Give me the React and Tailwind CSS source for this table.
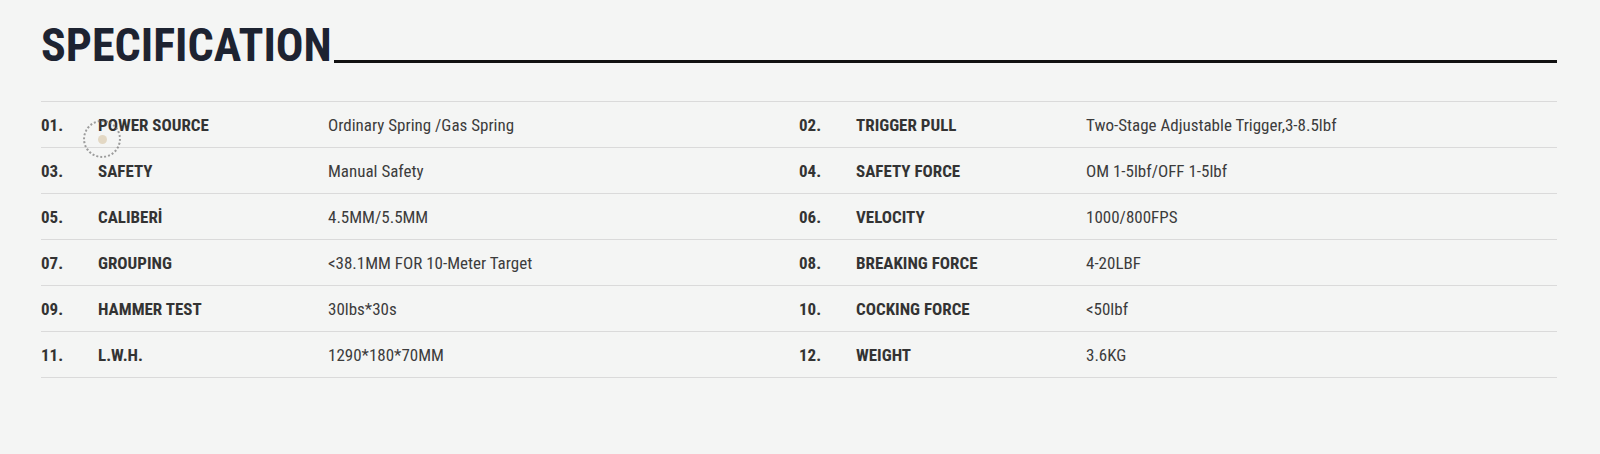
const specs = [
  ["01.", "POWER SOURCE", "Ordinary Spring /Gas Spring"],
  ["02.", "TRIGGER PULL", "Two-Stage Adjustable Trigger,3-8.5lbf"],
  ["03.", "SAFETY", "Manual Safety"],
  ["04.", "SAFETY FORCE", "OM 1-5lbf/OFF 1-5lbf"],
  ["05.", "CALIBERİ", "4.5MM/5.5MM"],
  ["06.", "VELOCITY", "1000/800FPS"],
  ["07.", "GROUPING", "<38.1MM FOR 10-Meter Target"],
  ["08.", "BREAKING FORCE", "4-20LBF"],
  ["09.", "HAMMER TEST", "30lbs*30s"],
  ["10.", "COCKING FORCE", "<50lbf"],
  ["11.", "L.W.H.", "1290*180*70MM"],
  ["12.", "WEIGHT", "3.6KG"],
];

export default function App() {
  return (
    <div className="relative min-h-[454px] bg-[#f4f5f4] pl-[41px] pr-[43px] pt-[22px] font-['Roboto_Condensed','Liberation_Sans_Narrow',Roboto,sans-serif]">
      <h2 className="flex items-end">
        <span className="text-[46px] leading-none font-bold text-[#1d2331]">SPECIFICATION</span>
        <span className="flex-1 h-[3px] bg-[#111] mb-[5px] ml-[2px]" />
      </h2>

      <div className="mt-[33px] grid grid-cols-2 border-t border-[#dadada]">
        {specs.map(([num, label, value]) => (
          <div key={num} className="flex items-center h-[46px] pt-[2px] border-b border-[#dadada] text-[17px]">
            <span className="w-[57px] font-bold text-[#333]">{num}</span>
            <span className="w-[230px] font-bold text-[#333]">{label}</span>
            <span className="text-[#3c3c3c]">{value}</span>
          </div>
        ))}
      </div>

      {/* cursor ring */}
      <div className="absolute left-[83px] top-[120px] w-[38px] h-[38px] rounded-full border-2 border-dotted border-[#777]/70 flex items-center justify-center">
        <div className="w-[9px] h-[9px] rounded-full bg-[#e3d8c4]" />
      </div>
    </div>
  );
}
